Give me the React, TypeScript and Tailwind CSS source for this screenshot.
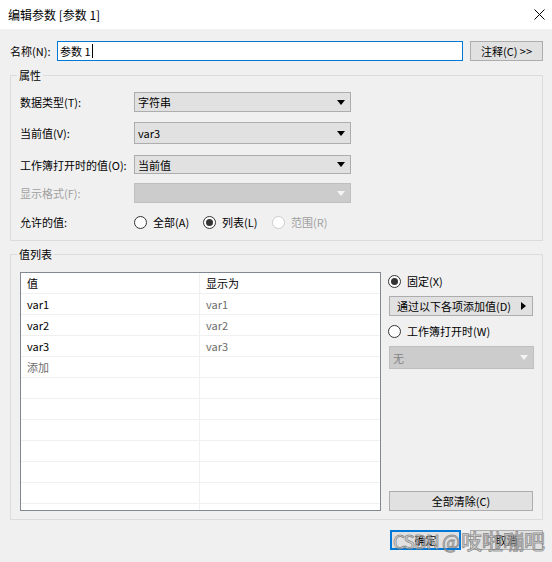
import React from 'react';

const rows = [
  { value: 'var1', display: 'var1' },
  { value: 'var2', display: 'var2' },
  { value: 'var3', display: 'var3' },
];

function Arrow({ disabled }: { disabled?: boolean }) {
  return (
    <svg width="8" height="5" viewBox="0 0 8 5" className="shrink-0">
      <path d="M0 0 L8 0 L4 5 Z" fill={disabled ? '#f4f4f4' : '#000000'} />
    </svg>
  );
}

function Select({ text, height, disabled, width }: { text?: string; height: string; disabled?: boolean; width: string }) {
  return (
    <div
      className={`${width} ${height} flex items-center justify-between pl-[3px] pr-[5px] border ${
        disabled ? 'bg-[#cccccc] border-[#bfbfbf] text-[#838383]' : 'bg-[#e1e1e1] border-[#adadad] text-black'
      }`}
    >
      <span>{text}</span>
      <Arrow disabled={disabled} />
    </div>
  );
}

function Radio({ checked, disabled, label }: { checked?: boolean; disabled?: boolean; label: string }) {
  return (
    <div className={`flex items-center h-[14px] whitespace-nowrap ${disabled ? 'text-[#a0a0a0]' : 'text-black'}`}>
      <span
        className={`w-[13px] h-[13px] shrink-0 rounded-full border flex items-center justify-center bg-white ${
          disabled ? 'border-[#cccccc]' : 'border-[#333333]'
        }`}
      >
        {checked && <span className="w-[7px] h-[7px] rounded-full bg-[#333333]" />}
      </span>
      <span className="ml-[6px]">{label}</span>
    </div>
  );
}

function Button({ children, className }: { children: React.ReactNode; className: string }) {
  return (
    <div className={`h-[20px] flex items-center justify-center bg-[#e1e1e1] border border-[#adadad] whitespace-nowrap ${className}`}>
      {children}
    </div>
  );
}

export default function App() {
  const tableRows = [
    ...rows.map((r) => ({ a: r.value, b: r.display, aGray: false })),
    { a: '添加', b: '', aGray: true },
    ...Array.from({ length: 8 }, () => ({ a: '', b: '', aGray: false })),
  ];

  return (
    <div className="relative w-[552px] h-[562px] flex flex-col overflow-hidden text-[11px] leading-[16px] text-black font-['Noto_Sans_CJK_SC','Microsoft_YaHei',sans-serif]">
      {/* title bar */}
      <div className="h-[29px] bg-white flex items-center justify-between pl-[8px] pr-[7px]">
        <span className="text-[12px]">编辑参数 [参数 1]</span>
        <svg width="11" height="11" viewBox="0 0 11 11">
          <path d="M0.5 0.5 L10.5 10.5 M10.5 0.5 L0.5 10.5" stroke="#000" strokeWidth="1" />
        </svg>
      </div>

      <div className="flex-1 bg-[#f0f0f0] pl-[10px] pr-[9px] pt-[12px]">
        {/* name row */}
        <div className="flex items-center h-[20px]">
          <span className="w-[47px] whitespace-nowrap">名称(N):</span>
          <div className="w-[406px] h-[20px] bg-white border border-[#0078d7] flex items-center pl-[2px]">
            <span>参数 1</span>
            <span className="w-px h-[14px] bg-black ml-[1px]" />
          </div>
          <Button className="ml-[7px] w-[73px]">注释(C) &gt;&gt;</Button>
        </div>

        {/* properties */}
        <fieldset className="mt-[6px] border border-[#dcdcdc] pl-[9px] pr-[9px] pt-[9px] pb-[11px]">
          <legend className="ml-[-3px] px-[2px] leading-[16px]">属性</legend>
          <div className="flex items-center h-[20px]">
            <span className="w-[114px] whitespace-nowrap">数据类型(T):</span>
            <Select text="字符串" width="w-[217px]" height="h-[20px]" />
          </div>
          <div className="flex items-center h-[22px] mt-[10px]">
            <span className="w-[114px] whitespace-nowrap">当前值(V):</span>
            <Select text="var3" width="w-[217px]" height="h-[22px]" />
          </div>
          <div className="flex items-center h-[19px] mt-[11px]">
            <span className="w-[114px] whitespace-nowrap">工作簿打开时的值(O):</span>
            <Select text="当前值" width="w-[217px]" height="h-[19px]" />
          </div>
          <div className="flex items-center h-[20px] mt-[9px]">
            <span className="w-[114px] whitespace-nowrap text-[#a0a0a0]">显示格式(F):</span>
            <Select width="w-[217px]" height="h-[20px]" disabled />
          </div>
          <div className="flex items-center h-[14px] mt-[12px]">
            <span className="w-[114px] whitespace-nowrap">允许的值:</span>
            <div className="w-[69px]">
              <Radio label="全部(A)" />
            </div>
            <div className="w-[69px]">
              <Radio label="列表(L)" checked />
            </div>
            <div>
              <Radio label="范围(R)" disabled />
            </div>
          </div>
        </fieldset>

        {/* value list */}
        <fieldset className="mt-[5px] border border-[#dcdcdc] pl-[9px] pr-[9px] pt-[10px] pb-[8px]">
          <legend className="ml-[-3px] px-[2px] leading-[16px]">值列表</legend>
          <div className="flex">
            <div className="w-[361px] h-[239px] bg-white border border-[#828790] overflow-hidden">
              <div className="flex h-[21px] border-b border-[#f0f0f0]">
                <div className="w-[179px] border-r border-[#f0f0f0] pl-[6px] flex items-center">值</div>
                <div className="flex-1 pl-[6px] flex items-center">显示为</div>
              </div>
              {tableRows.map((r, i) => (
                <div key={i} className="flex h-[21px] border-b border-[#f0f0f0]">
                  <div
                    className={`w-[179px] border-r border-[#f0f0f0] pl-[6px] flex items-center ${
                      r.aGray ? 'text-[#6d6d6d]' : 'text-black'
                    }`}
                  >
                    {r.a}
                  </div>
                  <div className="flex-1 pl-[6px] flex items-center text-[#6d6d6d]">{r.b}</div>
                </div>
              ))}
            </div>

            <div className="ml-[7px] w-[145px] flex flex-col">
              <div className="mt-[2px]">
                <Radio label="固定(X)" checked />
              </div>
              <div className="mt-[8px] ml-[1px] w-[144px] h-[20px] flex items-center justify-between bg-[#e1e1e1] border border-[#adadad] pl-[7px] pr-[6px] whitespace-nowrap">
                <span>通过以下各项添加值(D)</span>
                <svg width="5" height="8" viewBox="0 0 5 8">
                  <path d="M0 0 L5 4 L0 8 Z" fill="#000" />
                </svg>
              </div>
              <div className="mt-[8px]">
                <Radio label="工作簿打开时(W)" />
              </div>
              <div className="mt-[8px] ml-[1px]">
                <Select text="无" width="w-[145px]" height="h-[23px]" disabled />
              </div>
              <Button className="mt-auto ml-[1px] w-[144px]">全部清除(C)</Button>
            </div>
          </div>
        </fieldset>

        {/* footer buttons */}
        <div className="mt-[10px] flex justify-end gap-[9px]">
          <div className="w-[71px] h-[20px] flex items-center justify-center bg-[#e1e1e1] border-2 border-[#0078d7]">确定</div>
          <Button className="w-[73px]">取消</Button>
        </div>
      </div>

      {/* watermark */}
      <div className="absolute left-[393px] top-[528px] flex items-baseline leading-[24px] text-white/40 [-webkit-text-stroke:1px_rgba(120,120,120,0.75)] pointer-events-none whitespace-nowrap">
        <span className="text-[19px] tracking-[-1px]">CSDN @</span>
        <span className="text-[21px] ml-[2px]">吱啦嘣吧</span>
      </div>
    </div>
  );
}
